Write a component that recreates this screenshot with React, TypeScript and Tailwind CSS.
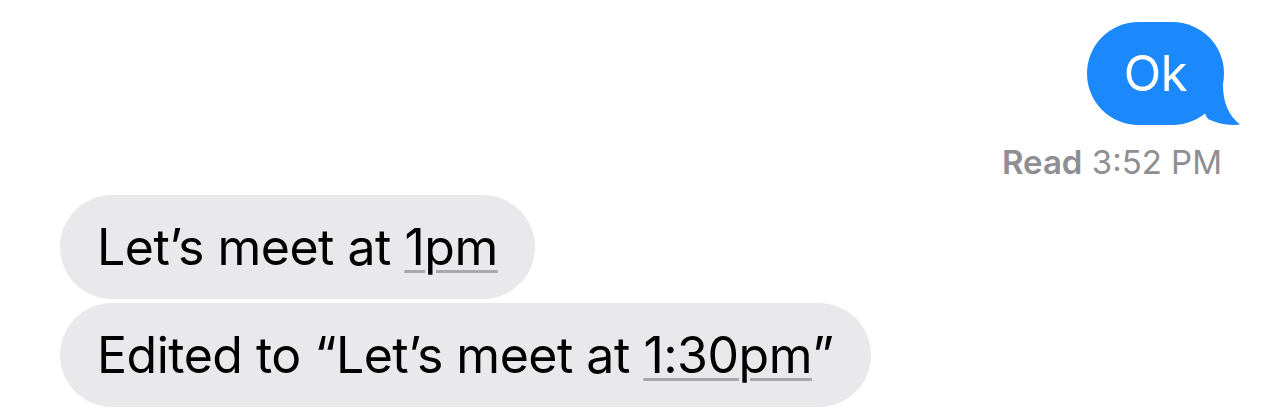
import React from 'react'

const font = { fontFamily: 'Inter, "Noto Sans", sans-serif' }

function SentBubble({ text }: { text: string }) {
  return (
    <div className="relative">
      <div className="relative z-10 flex h-[103px] w-[137px] items-center justify-center rounded-full bg-[#1b89fc] text-[49px] leading-none text-white tracking-[-0.01em]">
        {text}
      </div>
      {/* tail */}
      <svg
        className="absolute bottom-0 right-[-16px] z-0"
        width="40"
        height="40"
        viewBox="0 0 40 40"
      >
        <path d="M0 0 L23 0 C23 18 29 31 40 39.5 C30 41 18 39 8 34 L0 20 Z" fill="#1b89fc" />
      </svg>
    </div>
  )
}

function ReceivedBubble({ children }: { children: React.ReactNode }) {
  return (
    <div className="flex h-[104px] items-center rounded-full bg-[#e9e9eb] px-[37px] text-[50px] leading-none text-black tracking-[-0.01em]">
      {children}
    </div>
  )
}

function DateLink({ children }: { children: React.ReactNode }) {
  return (
    <span className="underline decoration-[#a8a8ab] decoration-[3px] underline-offset-[5px]">
      {children}
    </span>
  )
}

export default function App() {
  return (
    <div className="h-[409px] w-full overflow-hidden bg-white px-[60px] pt-[22px]" style={font}>
      <div className="flex flex-col items-end">
        <SentBubble text="Ok" />
        <div className="mt-[20px] pr-[2px] text-[33px] leading-[34px] text-[#8e8e93]">
          <span className="font-semibold">Read</span> 3:52 PM
        </div>
      </div>
      <div className="mt-[16px] flex flex-col items-start gap-[4px]">
        <ReceivedBubble>
          Let’s meet at&nbsp;<DateLink>1pm</DateLink>
        </ReceivedBubble>
        <ReceivedBubble>
          Edited to “Let’s meet at&nbsp;<DateLink>1:30pm</DateLink>”
        </ReceivedBubble>
      </div>
    </div>
  )
}
